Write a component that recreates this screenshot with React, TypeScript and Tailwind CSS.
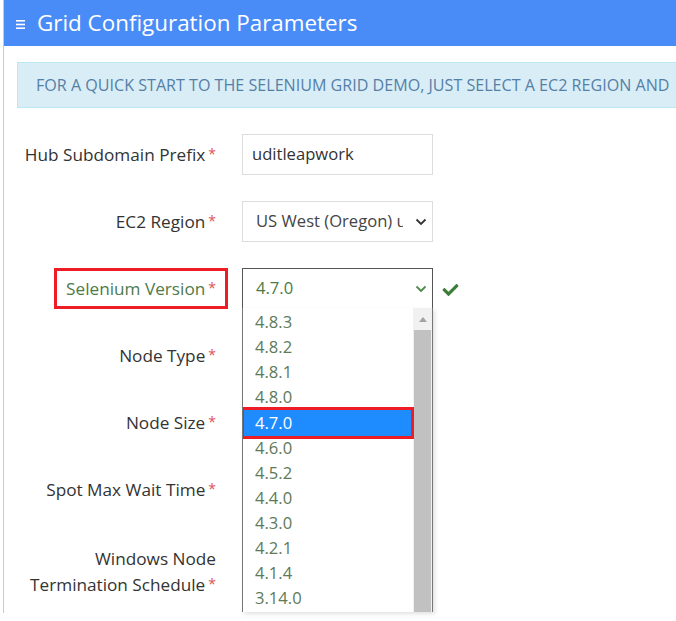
import { FaCheck } from 'react-icons/fa';

const versions = ['4.8.3', '4.8.2', '4.8.1', '4.8.0', '4.7.0', '4.6.0', '4.5.2', '4.4.0', '4.3.0', '4.2.1', '4.1.4', '3.14.0'];

function Chevron({ className }: { className?: string }) {
  return (
    <svg viewBox="0 0 12 8" className={className} fill="none" stroke="currentColor" strokeWidth="1.8">
      <path d="M1.5 1.5 6 6l4.5-4.5" />
    </svg>
  );
}

function Label({ text, success }: { text: string; success?: boolean }) {
  return (
    <span className={success ? 'text-[#4d7a4a]' : 'text-[#333]'}>
      {text}
      <span className="ml-[3px] text-[14px] text-[#e0525a] align-[2px]">*</span>
    </span>
  );
}

function Row({ label, children, success }: { label: string; children?: React.ReactNode; success?: boolean }) {
  return (
    <div className="flex h-[41px] items-center">
      <div className="flex w-[199px] justify-end whitespace-nowrap text-[17.2px]">
        {success ? (
          <div className="-mr-[12px] flex h-[41px] w-[174px] items-center justify-end border-[3px] border-[#ee1c25] pr-[9px]">
            <Label text={label} success />
          </div>
        ) : (
          <Label text={label} />
        )}
      </div>
      <div className="ml-[26px]">{children}</div>
    </div>
  );
}

export default function App() {
  return (
    <div className="h-[621px] w-[676px] overflow-hidden bg-white font-['Open_Sans',sans-serif]">
      <div className="ml-[3px] h-[613px] border-l border-[#b9cdee]">
        {/* Header */}
        <div className="flex h-[46px] items-center gap-[12px] bg-[#4a8cf7] pl-[12px] text-white">
          <svg viewBox="0 0 9 9" className="mt-[3px] h-[9px] w-[9px]" fill="currentColor">
            <rect x="0" y="0" width="9" height="1.6" />
            <rect x="0" y="3.7" width="9" height="1.6" />
            <rect x="0" y="7.4" width="9" height="1.6" />
          </svg>
          <h2 className="whitespace-nowrap text-[22.4px]">Grid Configuration Parameters</h2>
        </div>

        {/* Body */}
        <div className="relative pl-[13px] pt-[16px]">
          <div className="flex h-[46px] items-center overflow-hidden whitespace-nowrap border border-r-0 border-[#bce8f1] bg-[#d9edf7] pl-[18px] text-[16.1px] text-[#5580a6]">
            FOR A QUICK START TO THE SELENIUM GRID DEMO, JUST SELECT A EC2 REGION AND
          </div>

          <div className="mt-[26px] flex flex-col gap-[26px]">
            <Row label="Hub Subdomain Prefix">
              <div className="flex h-[41px] w-[191px] items-center border border-[#ddd] pl-[9px] text-[16.6px] text-[#333]">
                uditleapwork
              </div>
            </Row>
            <Row label="EC2 Region">
              <div className="flex h-[41px] w-[191px] items-center justify-between border border-[#ddd] pl-[13px] pr-[5px] text-[16.6px] text-[#444]">
                <span className="w-[147px] overflow-hidden whitespace-nowrap">US West (Oregon) us-west-2</span>
                <Chevron className="h-[8px] w-[12px] text-[#333]" />
              </div>
            </Row>
            <Row label="Selenium Version" success>
              <div className="flex items-center">
                <div className="flex h-[41px] w-[191px] items-center justify-between border border-[#555] pl-[13px] pr-[5px] text-[16.6px] text-[#4d7a4a]">
                  <span>4.7.0</span>
                  <Chevron className="h-[8px] w-[12px] text-[#4d8a4a]" />
                </div>
                <FaCheck className="ml-[9px] mt-[3px] h-[16px] w-[17px] text-[#3d7d3a]" />
              </div>
            </Row>
            <Row label="Node Type" />
            <Row label="Node Size" />
            <Row label="Spot Max Wait Time" />
            <div className="flex">
              <div className="w-[199px] whitespace-nowrap pt-[10px] text-right text-[17.2px] leading-[25px] text-[#333]">
                Windows Node
                <br />
                <Label text="Termination Schedule" />
              </div>
            </div>
          </div>

          {/* Open select dropdown */}
          <div className="absolute left-[238px] top-[262px] flex h-[304px] w-[191px] overflow-hidden border-x border-[#767676] bg-white shadow-[2px_2px_4px_rgba(0,0,0,0.12)]">
            <ul className="flex-1 pt-[2px]">
              {versions.map((v) =>
                v === '4.7.0' ? (
                  <li key={v} className="relative z-10 -ml-[2px] -mr-[1px] my-[-3px] h-[32px] border-[3px] border-[#ee1c25]">
                    <div className="flex h-[26px] items-center bg-[#1e8cff] pl-[11px] text-[16.6px] text-white">{v}</div>
                  </li>
                ) : (
                  <li key={v} className="flex h-[25px] items-center pl-[12px] text-[16.6px] text-[#5e7a58]">
                    {v}
                  </li>
                )
              )}
            </ul>
            <div className="flex w-[19px] flex-col items-center bg-[#f1f1f1]">
              <div className="flex h-[22px] items-center">
                <svg viewBox="0 0 8 5" className="h-[5px] w-[8px]" fill="#a3a3a3">
                  <path d="M0 5 4 0l4 5z" />
                </svg>
              </div>
              <div className="w-[17px] flex-1 bg-[#c1c1c1]" />
            </div>
          </div>
        </div>
      </div>
    </div>
  );
}
